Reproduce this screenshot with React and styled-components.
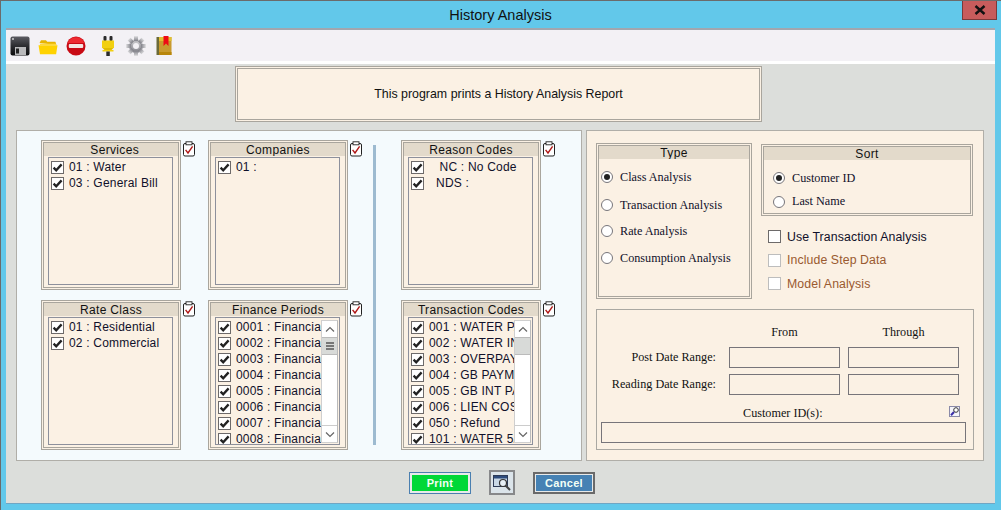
import React from "react";
import styled, { createGlobalStyle } from "styled-components";

const Global = createGlobalStyle`
  html, body { margin: 0; padding: 0; background: #62c8ea; }
  #root { width: 1001px; height: 510px; overflow: hidden; }
`;
const Sans = `"Liberation Sans", Arial, sans-serif`;
const Serif = `"Liberation Serif", "Times New Roman", serif`;

const Win = styled.div`
  position: relative; box-sizing: border-box; width: 1001px; height: 510px;
  background: #62c8ea; border-top: 1px solid #6b6b6b; border-left: 1px solid #6b6b6b;
  padding: 0 6px 6px 5px; display: flex; flex-direction: column;
`;
const TitleBar = styled.div`
  height: 27px; flex: none; display: flex; align-items: center; justify-content: center;
  font: 14.5px ${Sans}; color: #111; padding-top: 1px; box-sizing: border-box;
`;
const Close = styled.div`
  position: absolute; top: 0; right: 4px; width: 33px; height: 18px; background: #c75c5c;
  border: 1px solid #7a3a3a; border-top: none; display: flex; align-items: center; justify-content: center;
`;
const Content = styled.div`
  flex: 1; background: #dcdedb; display: flex; flex-direction: column; min-height: 0;
  border-bottom: 1px solid #6fa6c4;
`;
const Toolbar = styled.div`
  height: 31px; flex: none; background: #f3f1f5; border-top: 2px solid #a2a6ae; border-bottom: 3px solid #fff;
  display: flex; align-items: center; padding-left: 4px;
`;
const Tool = styled.div`
  width: 20px; height: 20px; flex: none; margin-left: ${p => p.$ml ?? 8}px;
  svg { display: block; }
`;
const Banner = styled.div`
  align-self: flex-start; box-sizing: border-box; margin: 2px 0 0 229px; width: 527px; height: 56px;
  border: 3px double #a9a59d; background: #fbf1e4; display: flex; align-items: center; justify-content: center;
  font: 12.4px ${Sans}; color: #111;
`;
const Main = styled.div`
  display: flex; gap: 4px; margin: 8px 0 0 10px; height: 331px;
`;
const LeftPanel = styled.div`
  box-sizing: border-box; width: 566px; background: #f4fafd; border: 1px solid #b0aea8;
  padding: 9px 0 0 24px; display: flex;
`;
const Col = styled.div`
  display: flex; flex-direction: column; gap: 10px; width: ${p => p.$w}px; flex: none;
`;
const Cell = styled.div` display: flex; gap: 2px; align-items: flex-start; `;
const Divider = styled.div`
  width: 3px; height: 300px; margin: 5px 25px 0 9px; background: #9dbad0; flex: none;
`;
const Group = styled.div`
  box-sizing: border-box; width: ${p => p.$w || 140}px; height: ${p => p.$h || 150}px; flex: none;
  border: 3px double #a9a59d; background: #fbf1e4; display: flex; flex-direction: column;
`;
const GroupTitle = styled.div`
  height: 13px; background: #e3dacb; text-align: center; flex: none;
  font: 12px/15px ${Sans}; color: #111; letter-spacing: .35px; overflow: hidden;
`;
const ListBox = styled.div`
  flex: 1; min-height: 0; margin: 1px 5px 2px 4px; border: 1px solid #8d909c; display: flex; overflow: hidden;
`;
const Items = styled.div`
  flex: 1; min-width: 0; overflow: hidden; padding: 1px 0 0 2px;
`;
const Row = styled.div`
  height: 16px; display: flex; align-items: center; gap: 5px; white-space: nowrap;
  font: 12px ${Sans}; color: #10102a; letter-spacing: .2px;
`;
const Box = styled.span`
  box-sizing: border-box; width: 13px; height: 13px; flex: none; background: #fff;
  border: 1px solid ${p => p.$off ? "#bdbdbd" : "#6d6a6a"}; display: inline-flex; align-items: center; justify-content: center;
`;
const Scroll = styled.div`
  width: 17px; flex: none; margin: 2px 1px 0 0; background: #fff; border: 1px solid #cfcfcf; border-right-color:#bbb; box-sizing: border-box;
  display: flex; flex-direction: column; height: 123px;
`;
const ScrollBtn = styled.div`
  height: 16px; flex: none; display: flex; align-items: center; justify-content: center; background: #fff;
`;
const Thumb = styled.div`
  height: 18px; flex: none; background: #d8dad8; border-top: 1px solid #bbb; border-bottom: 1px solid #bbb; box-sizing: border-box;
  display: flex; flex-direction: column; align-items: center; justify-content: center; gap: 1px;
  i { display: block; width: 8px; height: 2px; background: #777; }
`;
const Track = styled.div` flex: 1; border-bottom: 1px solid #ccc; `;
const RightPanel = styled.div`
  box-sizing: border-box; width: 398px; background: #fbf1e4; border: 1px solid #b0aea8;
  padding: 12px 0 0 9px;
`;
const TopArea = styled.div` display: flex; gap: 9px; `;
const RadioCol = styled.div` display: flex; flex-direction: column; padding: ${p => p.$pad || 0}; `;
const RadioRow = styled.div`
  height: ${p => p.$h}px; display: flex; align-items: center; gap: 7px; white-space: nowrap;
  font: 12.2px ${Serif}; color: #10102a;
`;
const Radio = styled.span`
  box-sizing: border-box; width: 12px; height: 12px; border-radius: 50%; background: #fff; border: 1px solid #77757a; flex: none;
  display: inline-flex; align-items: center; justify-content: center;
  &::after { content: ""; width: 6px; height: 6px; border-radius: 50%; background: ${p => p.$on ? "#222" : "transparent"}; }
`;
const SideCol = styled.div` display: flex; flex-direction: column; padding-top: 1px; `;
const Opts = styled.div` display: flex; flex-direction: column; margin: 9px 0 0 7px; `;
const OptRow = styled.div`
  height: 23.5px; display: flex; align-items: center; gap: 6px; white-space: nowrap;
  font: 12.3px ${Sans}; letter-spacing: .1px; color: ${p => p.$off ? "#9a5a30" : "#10102a"};
`;
const DateGroup = styled.div`
  box-sizing: border-box; width: 378px; height: 141px; margin-top: 10px; border: 1px solid #aaa8a2; padding: 15px 0 0 4px;
  font: 12.2px ${Serif}; color: #111;
`;
const HeadRow = styled.div` display: flex; height: 22px; `;
const HeadCell = styled.div` width: ${p => p.$w}px; text-align: center; flex: none; margin-left: ${p => p.$ml || 0}px; `;
const DateRow = styled.div` display: flex; align-items: center; gap: 8px; height: 21px; margin-bottom: 6px; `;
const DateLabel = styled.div` width: 115px; text-align: right; margin-right: 5px; flex: none; `;
const Field = styled.div`
  box-sizing: border-box; height: 21px; width: ${p => p.$w}px; border: 1px solid #77757a; flex: none;
`;
const IdRow = styled.div` display: flex; align-items: center; height: 21px; margin-top: 1px; `;
const IdLabel = styled.div` margin-left: 142px; padding-top: 3px; `;
const Lookup = styled.div` margin-left: 126px; margin-top: -1px; width: 11px; height: 11px; `;
const Footer = styled.div` display: flex; align-items: center; padding: 9px 0 0 403px; gap: 18px; `;
const Btn = styled.div`
  box-sizing: border-box; width: 62px; height: 22px; border: ${p => p.$bw}px solid ${p => p.$edge};
  padding: ${p => 3 - p.$bw}px; background: #e8eaea;
`;
const BtnFace = styled.div`
  height: 100%; background: ${p => p.$bg}; color: #f2fff6; display: flex; align-items: center; justify-content: center;
  font: bold 11px ${Sans}; letter-spacing: .3px;
`;
const Preview = styled.div`
  box-sizing: border-box; width: 26px; height: 25px; border: 2px solid #87888a; background: #dbe4ea;
  display: flex; align-items: center; justify-content: center;
`;

const Check = () => (
  <svg width="11" height="11" viewBox="0 0 11 11"><path d="M1.6 5.6 4.2 8.3 9.6 2.4" fill="none" stroke="#222" strokeWidth="2.3" /></svg>
);
const Clip = () => (
  <svg width="14" height="16" viewBox="0 0 14 16" style={{ flex: "none", marginTop: 1 }}>
    <rect x=".5" y="2.5" width="11" height="12.5" rx="1.5" fill="#fff" stroke="#222" />
    <rect x="3" y="0.8" width="6" height="3" fill="#fff" stroke="#222" strokeWidth=".9" />
    <path d="M2.6 8.8 5 12 9.6 5.4" fill="none" stroke="#b01818" strokeWidth="1.4" />
  </svg>
);
const Up = () => <svg width="10" height="7" viewBox="0 0 10 7"><path d="M1 5.5 5 1.5 9 5.5" fill="none" stroke="#666" strokeWidth="1.2" /></svg>;
const Down = () => <svg width="10" height="7" viewBox="0 0 10 7"><path d="M1 1.5 5 5.5 9 1.5" fill="none" stroke="#666" strokeWidth="1.2" /></svg>;

const Bar = ({ grip }) => (
  <Scroll>
    <ScrollBtn><Up /></ScrollBtn>
    <Thumb>{grip && <><i /><i /><i /></>}</Thumb>
    <Track />
    <ScrollBtn><Down /></ScrollBtn>
  </Scroll>
);

const ListGroup = ({ title, items, scroll, grip }) => (
  <Cell>
    <Group>
      <GroupTitle>{title}</GroupTitle>
      <ListBox>
        <Items>
          {items.map((t, i) => (
            <Row key={i}><Box><Check /></Box><span>{t}</span></Row>
          ))}
        </Items>
        {scroll && <Bar grip={grip} />}
      </ListBox>
    </Group>
    <Clip />
  </Cell>
);

const Floppy = () => (
  <svg width="20" height="20" viewBox="0 0 20 20">
    <defs><linearGradient id="fl" x1="0" y1="0" x2="0" y2="1"><stop offset="0" stopColor="#5c5c62" /><stop offset=".5" stopColor="#2c2c30" /><stop offset="1" stopColor="#0c0c0e" /></linearGradient></defs>
    <rect x=".5" y=".5" width="19" height="19" rx="2" fill="url(#fl)" />
    <rect x="5" y="11" width="11" height="8" fill="#b9b9bb" /><rect x="6" y="12.5" width="3" height="5" fill="#222" />
    <circle cx="3" cy="3" r=".9" fill="#ddd" />
  </svg>
);
const Folder = () => (
  <svg width="20" height="20" viewBox="0 0 20 20">
    <path d="M1.5 7 3 4.2h5l1.2 1.6h8.2L18.5 9z" fill="#e8b400" />
    <path d="M.5 9.2h19l-1.4 9H2z" fill="#ffd200" />
    <path d="M2 8.5h16" stroke="#ffd83a" strokeWidth="1.6" />
  </svg>
);
const NoEntry = () => (
  <svg width="20" height="20" viewBox="0 0 20 20">
    <circle cx="10" cy="10" r="9.5" fill="#c80a14" />
    <path d="M1.6 7a9 9 0 0 1 16.8 0z" fill="#ee2a30" />
    <rect x="2.8" y="8" width="14.4" height="4" rx="1" fill="#f3e6e2" />
  </svg>
);
const Plug = () => (
  <svg width="16" height="20" viewBox="0 0 16 20">
    <rect x="3.5" y="0" width="3" height="5" rx="1" fill="#2a2a2a" /><rect x="9.5" y="0" width="3" height="5" rx="1" fill="#2a2a2a" />
    <rect x="2" y="4.5" width="12" height="7.5" fill="#f2d010" />
    <path d="M2.5 12H13.500L10.500 15H5.500z" fill="#e0bc00" /><rect x="2.500" y="14" width="11" height="1.500" fill="#f2d010" />
    <rect x="6.300" y="15.500" width="3.500" height="4.500" fill="#2a2a2a" />
  </svg>
);
const Gear = () => (
  <svg width="20" height="20" viewBox="0 0 20 20">
    <defs><linearGradient id="gr" x1="0" y1="0" x2="0" y2="1"><stop offset="0" stopColor="#d8d8da" /><stop offset="1" stopColor="#7e7e86" /></linearGradient></defs>
    <g fill="url(#gr)">
      <circle cx="10" cy="10" r="7" />
      {[0, 45, 90, 135, 180, 225, 270, 315].map(a => <rect key={a} x="8" y="0.200" width="4" height="5" transform={`rotate(${a} 10 10)`} />)}
    </g>
    <circle cx="10" cy="10" r="3" fill="#f3f1f5" />
  </svg>
);
const Book = () => (
  <svg width="16" height="20" viewBox="0 0 16 20">
    <rect x="0.500" y="1" width="2.500" height="18" fill="#6b6a38" />
    <rect x="3" y="1" width="12.500" height="18" fill="#c89a2e" />
    <rect x="3" y="1" width="12.500" height="4" fill="#e0c030" /><rect x="3" y="16" width="12.500" height="3" fill="#b8860b" />
    <path d="M7.500 0H12.500V10L10 7.500 7.500 10z" fill="#ee0a14" />
  </svg>
);
const Mag = () => (
  <svg width="11" height="11" viewBox="0 0 11 11" style={{ display: "block" }}>
    <rect x=".5" y=".5" width="10" height="10" fill="#f4f4fa" stroke="#8a8aa8" />
    <path d="M2 9.200 5 6" stroke="#3a2ea8" strokeWidth="2" />
    <circle cx="7" cy="4" r="2.300" fill="#fff" stroke="#333" />
  </svg>
);
const PreviewIcon = () => (
  <svg width="18" height="17" viewBox="0 0 18 17">
    <rect x=".5" y="1.500" width="14" height="11" fill="#c9d8e6" stroke="#2c3a56" />
    <rect x="1" y="2" width="13" height="2.500" fill="#2c4a7c" />
    <circle cx="10" cy="9" r="3.500" fill="#e8f0f6" stroke="#333" strokeWidth="1.200" />
    <path d="M12.500 11.500 17 16" stroke="#444" strokeWidth="2" />
  </svg>
);

const fin = ["0001", "0002", "0003", "0004", "0005", "0006", "0007", "0008"].map(n => `${n} : Financial`);
const tx = ["001 : WATER PAY", "002 : WATER INT", "003 : OVERPAYMENT", "004 : GB PAYMENT", "005 : GB INT PAY", "006 : LIEN COST", "050 : Refund", "101 : WATER 5/8"];

export default function App() {
  return (
    <>
      <Global />
      <Win>
        <TitleBar>History Analysis</TitleBar>
        <Close>
          <svg width="12" height="10" viewBox="0 0 12 10"><path d="M1.500 1 10.500 9M10.500 1 1.500 9" stroke="#111" strokeWidth="2.400" /></svg>
        </Close>
        <Content>
          <Toolbar>
            <Tool $ml={0}><Floppy /></Tool>
            <Tool><Folder /></Tool>
            <Tool><NoEntry /></Tool>
            <Tool $ml={14}><Plug /></Tool>
            <Tool $ml={6}><Gear /></Tool>
            <Tool $ml={10}><Book /></Tool>
          </Toolbar>
          <Banner>This program prints a History Analysis Report</Banner>
          <Main>
            <LeftPanel>
              <Col $w={167}>
                <ListGroup title={"\u00a0\u00a0Services"} items={["01 : Water", "03 : General Bill"]} />
                <ListGroup title="Rate Class" items={["01 : Residential", "02 : Commercial"]} />
              </Col>
              <Col $w={156}>
                <ListGroup title="Companies" items={["01 :"]} />
                <ListGroup title="Finance Periods" items={fin} scroll grip />
              </Col>
              <Divider />
              <Col $w={156}>
                <ListGroup title="Reason Codes" items={["\u00a0\u00a0\u00a0NC : No Code", "\u00a0\u00a0NDS :"]} />
                <ListGroup title="Transaction Codes" items={tx} scroll />
              </Col>
            </LeftPanel>
            <RightPanel>
              <TopArea>
                <Group $w={156} $h={156}>
                  <GroupTitle>Type</GroupTitle>
                  <RadioCol $pad="4px 0 0 2px">
                    <RadioRow $h={28}><Radio $on />Class Analysis</RadioRow>
                    <RadioRow $h={28}><Radio />Transaction Analysis</RadioRow>
                    <RadioRow $h={24}><Radio />Rate Analysis</RadioRow>
                    <RadioRow $h={30}><Radio />Consumption Analysis</RadioRow>
                  </RadioCol>
                </Group>
                <SideCol>
                  <Group $w={212} $h={72}>
                    <GroupTitle>Sort</GroupTitle>
                    <RadioCol $pad="6px 0 0 9px">
                      <RadioRow $h={24}><Radio $on />Customer ID</RadioRow>
                      <RadioRow $h={23}><Radio />Last Name</RadioRow>
                    </RadioCol>
                  </Group>
                  <Opts>
                    <OptRow><Box />Use Transaction Analysis</OptRow>
                    <OptRow $off><Box $off />Include Step Data</OptRow>
                    <OptRow $off><Box $off />Model Analysis</OptRow>
                  </Opts>
                </SideCol>
              </TopArea>
              <DateGroup>
                <HeadRow>
                  <HeadCell $w={111} $ml={128}>From</HeadCell>
                  <HeadCell $w={111} $ml={8}>Through</HeadCell>
                </HeadRow>
                <DateRow><DateLabel>Post Date Range:</DateLabel><Field $w={111} /><Field $w={111} /></DateRow>
                <DateRow><DateLabel>Reading Date Range:</DateLabel><Field $w={111} /><Field $w={111} /></DateRow>
                <IdRow><IdLabel>Customer ID(s):</IdLabel><Lookup><Mag /></Lookup></IdRow>
                <Field $w={365} />
              </DateGroup>
            </RightPanel>
          </Main>
          <Footer>
            <Btn $edge="#4a7fb0" $bw={1}><BtnFace $bg="#00d837">Print</BtnFace></Btn>
            <Preview><PreviewIcon /></Preview>
            <Btn $edge="#6a6a6a" $bw={2}><BtnFace $bg="#4682b4">Cancel</BtnFace></Btn>
          </Footer>
        </Content>
      </Win>
    </>
  );
}
